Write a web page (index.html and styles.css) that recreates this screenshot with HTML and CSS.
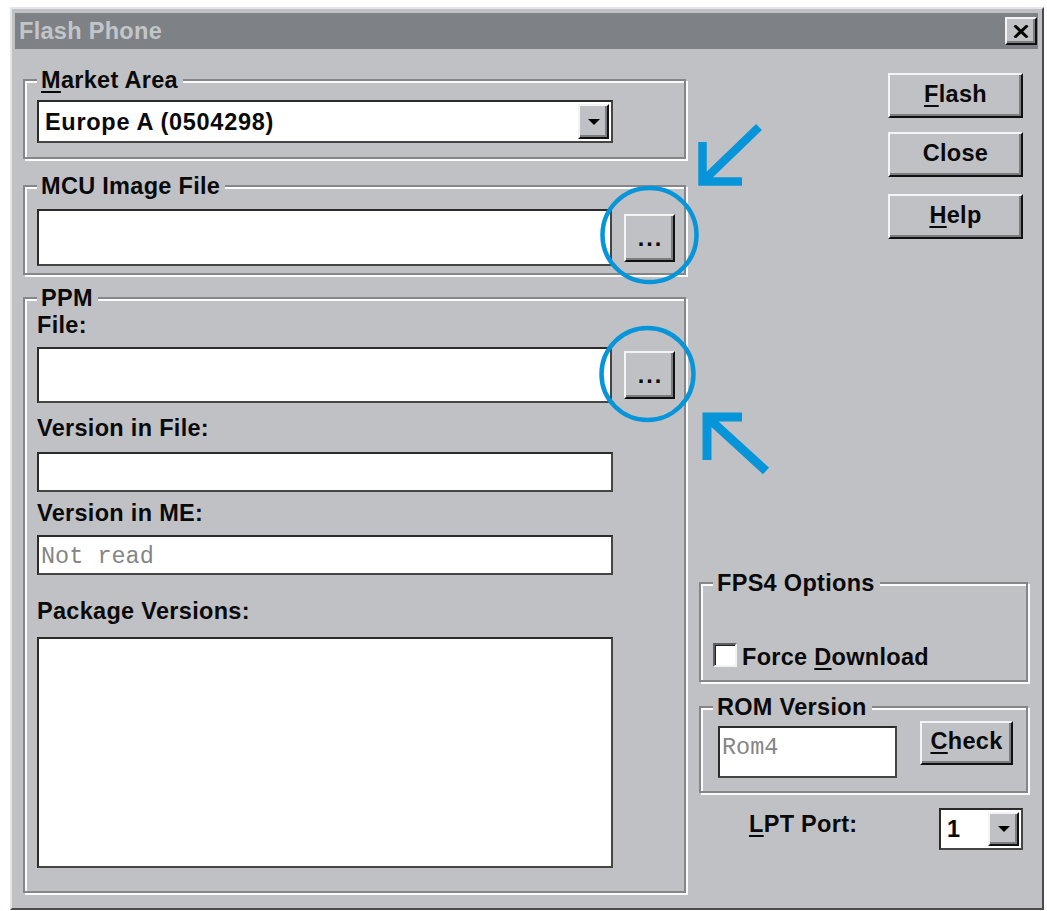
FILE: index.html
```html
<!DOCTYPE html>
<html lang="en">
<head>
<meta charset="utf-8">
<title>Flash Phone</title>
<link rel="stylesheet" href="styles.css">
</head>
<body>
<div class="window">
  <div class="titlebar">
    <span class="title">Flash Phone</span>
    <button class="btn title-close" aria-label="Close">
      <svg width="16" height="13" viewBox="0 0 16 13"><path d="M1.5 0.5 L14.5 12.5 M14.5 0.5 L1.5 12.5" stroke="#000" stroke-width="3" fill="none"/></svg>
    </button>
  </div>
  <div class="client">
    <div class="left-col">
      <fieldset class="group group-market">
        <legend><u>M</u>arket Area</legend>
        <div class="combo combo-market">
          <span class="combo-value combo-value-wide">Europe A (0504298)</span>
          <span class="btn drop-btn"><svg width="12" height="6" viewBox="0 0 12 6"><polygon points="0,0 12,0 6,6" fill="#000"/></svg></span>
        </div>
      </fieldset>

      <fieldset class="group group-mcu">
        <legend>MCU Image File</legend>
        <div class="file-row">
          <div class="field field-file field-file-mcu"></div>
          <button class="btn btn-browse">...</button>
        </div>
      </fieldset>

      <fieldset class="group group-ppm">
        <legend>PPM</legend>
        <div class="label label-file">File:</div>
        <div class="file-row file-row-ppm">
          <div class="field field-file field-file-ppm"></div>
          <button class="btn btn-browse">...</button>
        </div>
        <div class="label label-vfile">Version in File:</div>
        <div class="field field-version field-vfile"></div>
        <div class="label label-vme">Version in ME:</div>
        <div class="field field-version field-vme field-mono">Not read</div>
        <div class="label label-pkg">Package Versions:</div>
        <div class="field field-packages"></div>
      </fieldset>
    </div>

    <div class="right-col">
      <button class="btn btn-action btn-flash"><u>F</u>lash</button>
      <button class="btn btn-action btn-close">Close</button>
      <button class="btn btn-action btn-help"><u>H</u>elp</button>

      <fieldset class="group group-fps">
        <legend>FPS4 Options</legend>
        <label class="check-row">
          <span class="checkbox"></span>
          <span class="check-text">Force <u>D</u>ownload</span>
        </label>
      </fieldset>

      <fieldset class="group group-rom">
        <legend>ROM Version</legend>
        <div class="rom-row">
          <div class="field field-rom field-mono">Rom4</div>
          <button class="btn btn-check"><u>C</u>heck</button>
        </div>
      </fieldset>

      <div class="lpt-row">
        <span class="lpt-label"><u>L</u>PT Port:</span>
        <div class="combo combo-lpt">
          <span class="combo-value">1</span>
          <span class="btn drop-btn"><svg width="12" height="6" viewBox="0 0 12 6"><polygon points="0,0 12,0 6,6" fill="#000"/></svg></span>
        </div>
      </div>
    </div>
  </div>
</div>

<svg class="callouts" width="1047" height="911" viewBox="0 0 1047 911" aria-hidden="true">
  <g fill="none" stroke="#0795d9">
    <circle cx="649.5" cy="235" r="47" stroke-width="4.5"/>
    <circle cx="647.5" cy="374" r="46" stroke-width="4.5"/>
    <path d="M702.5 142 V181.5 H742 M702.5 181.5 L759 127" stroke-width="8.5"/>
    <path d="M707 460 V417 H742 M707 417 L766 471" stroke-width="9"/>
  </g>
</svg>
</body>
</html>
```

FILE: styles.css
```css
* { box-sizing: border-box; }

html, body {
  margin: 0;
  padding: 0;
  background: #ffffff;
}

body {
  font-family: "Liberation Sans", Arial, sans-serif;
  font-weight: bold;
  font-size: 23.5px;
  line-height: 26px;
  letter-spacing: 0.3px;
  color: #0a0a0a;
}

u {
  text-decoration-thickness: 2px;
  text-underline-offset: 3px;
}

/* dialog frame */
.window {
  margin: 7px 0 0 10px;
  width: 1034px;
  height: 903px;
  background: #c0c1c5;
  border: 2px solid;
  border-color: #e4e5e8 #4a4b4e #4a4b4e #e4e5e8;
  padding: 4px 4px 0 3px;
  display: flex;
  flex-direction: column;
}

.titlebar {
  height: 36px;
  flex: none;
  background: #7e8286;
  display: flex;
  align-items: center;
  padding-left: 4px;
}

.title {
  color: #c3c6c9;
}

/* raised 3D button face */
.btn {
  font: inherit;
  color: inherit;
  letter-spacing: inherit;
  margin: 0;
  padding: 0;
  background: #c0c1c5;
  border: 2px solid;
  border-color: #f4f4f6 #111111 #111111 #f4f4f6;
  box-shadow: inset -2px -2px 0 #7c7d81;
  display: flex;
  align-items: center;
  justify-content: center;
}

.title-close {
  margin-left: auto;
  margin-right: 1px;
  width: 32px;
  height: 28px;
}

.client {
  flex: 1;
  display: grid;
  grid-template-columns: 663px 329px;
  column-gap: 13px;
  padding: 18px 0 0 8px;
  align-items: start;
}

.left-col,
.right-col {
  display: flex;
  flex-direction: column;
}

/* etched group boxes */
.group {
  margin: 0;
  min-width: 0;
  border: 2px solid #85868a;
  box-shadow: inset 2px 2px 0 #fbfbfc, 2px 2px 0 #fbfbfc;
}

.group legend {
  padding: 0 5px 0 4px;
  margin: 0;
  line-height: 26px;
  background: #c0c1c5;
}

.group-market { padding: 7px 0 14px 12px; }
.group-mcu    { margin-top: 14px; padding: 10px 0 7px 12px; }
.group-ppm    { margin-top: 10px; padding: 1px 0 23px 12px; }

/* sunken white fields */
.field {
  background: #ffffff;
  border: 2px solid;
  border-color: #2b2b2b #454545 #454545 #2b2b2b;
}

.field-mono {
  font-family: "Liberation Mono", "Courier New", monospace;
  font-weight: normal;
  font-size: 23.5px;
  line-height: 26px;
  letter-spacing: 0;
  color: #858585;
  padding: 7px 0 0 2px;
}

.combo {
  background: #ffffff;
  border: 2px solid;
  border-color: #2b2b2b #454545 #454545 #2b2b2b;
  padding: 2px;
  display: flex;
  align-items: stretch;
}

.combo-value {
  flex: 1;
  padding-left: 4px;
  display: flex;
  align-items: center;
}

.combo-value-wide { letter-spacing: 0.7px; }

.drop-btn {
  width: 31px;
  flex: none;
}

.combo-market {
  width: 576px;
  height: 43px;
}

.file-row {
  display: flex;
  align-items: center;
  gap: 12px;
}

.field-file {
  width: 575px;
  height: 57px;
}

.field-file-ppm { height: 56px; }

.btn-browse {
  width: 51px;
  height: 48px;
  letter-spacing: 2px;
  padding-left: 2px;
}

.label-file  { margin-top: 0; }
.file-row-ppm { margin-top: 9px; }
.label-vfile { margin-top: 12px; }
.field-version { width: 576px; height: 40px; }
.field-vfile { margin-top: 11px; }
.label-vme   { margin-top: 8px; }
.field-vme   { margin-top: 9px; }
.label-pkg   { margin-top: 23px; }
.field-packages {
  margin-top: 13px;
  width: 576px;
  height: 231px;
}

/* right column */
.btn-action {
  width: 135px;
  height: 45px;
  align-self: flex-end;
  margin-right: 5px;
  padding-bottom: 4px;
}

.btn-flash { margin-top: 6px; }
.btn-close { margin-top: 14px; }
.btn-help  { margin-top: 17px; }

.group-fps { margin-top: 331px; padding: 47px 0 13px 12px; }

.check-row {
  display: flex;
  align-items: flex-start;
  gap: 5px;
  height: 24px;
}

.checkbox {
  width: 24px;
  height: 24px;
  flex: none;
  background: #ffffff;
  border: 2px solid;
  border-color: #5e5f62 #f2f2f3 #f2f2f3 #5e5f62;
  box-shadow: inset 1px 1px 0 #1e1e1e;
}

.check-text { margin-top: 1px; }

.group-rom { margin-top: 12px; padding: 1px 0 13px 12px; }

.rom-row {
  display: flex;
  align-items: flex-start;
}

.field-rom {
  width: 179px;
  height: 52px;
  margin: 5px 0 0 5px;
}

.btn-check {
  width: 93px;
  height: 44px;
  margin-left: 23px;
  padding-bottom: 4px;
}

.lpt-row {
  display: flex;
  align-items: flex-start;
  margin-top: 15px;
  padding-left: 50px;
}

.lpt-label { margin-top: 3px; }

.combo-lpt {
  margin-left: auto;
  margin-right: 5px;
  width: 84px;
  height: 42px;
}

/* blue callout marks drawn over the dialog */
.callouts {
  position: absolute;
  top: 0;
  left: 0;
  pointer-events: none;
}
```
